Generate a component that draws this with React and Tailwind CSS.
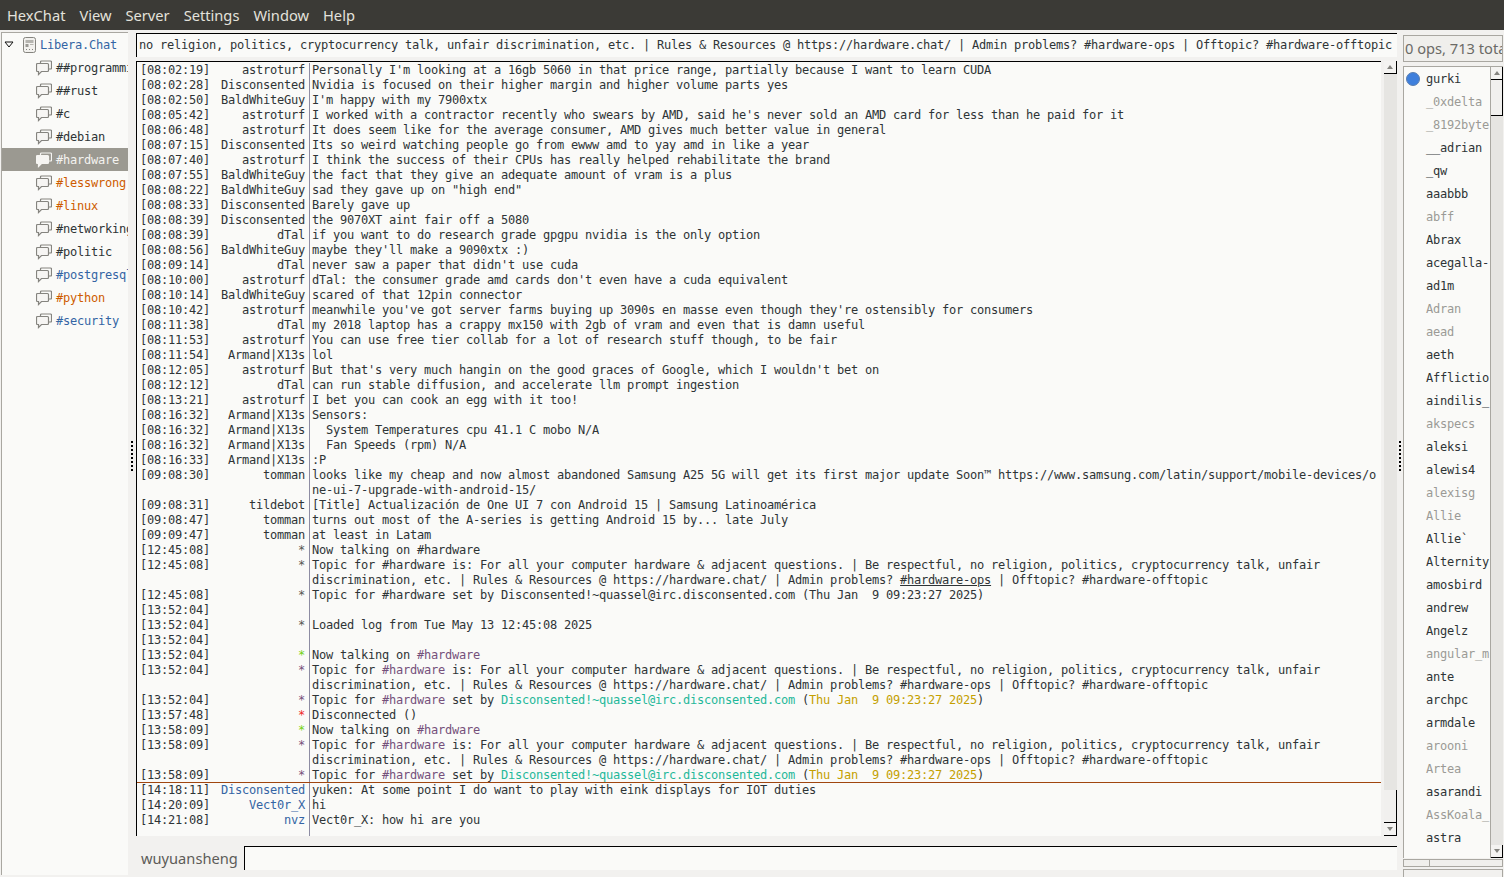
const HASH = 'text-[#75507b]'
const TEAL = 'text-[#1fb89a]'
const GOLD = 'text-[#c4a000]'

const topic1 = 'Topic for #hardware is: For all your computer hardware & adjacent questions. | Be respectful, no religion, politics, cryptocurrency talk, unfair'
const topic2 = 'discrimination, etc. | Rules & Resources @ https://hardware.chat/ | Admin problems? #hardware-ops | Offtopic? #hardware-offtopic'

function coloredTopic() {
  return (
    <>
      Topic for <span className={HASH}>#hardware</span> is: For all your computer hardware &amp; adjacent questions. | Be respectful, no religion, politics, cryptocurrency talk, unfair
    </>
  )
}

function coloredSetBy() {
  return (
    <>
      Topic for <span className={HASH}>#hardware</span> set by <span className={TEAL}>Disconsented!~quassel@irc.disconsented.com</span> (<span className={GOLD}>Thu Jan  9 09:23:27 2025</span>)
    </>
  )
}

function talking() {
  return (
    <>
      Now talking on <span className={HASH}>#hardware</span>
    </>
  )
}

const GRAY_STAR = 'text-[#555753]'
const PURPLE_STAR = 'text-[#75507b]'
const GREEN_STAR = 'text-[#73d216]'
const RED_STAR = 'text-[#ef2929]'
const BLUE_NICK = 'text-[#3465a4]'

const rows = [
  ['[08:02:19]', 'astroturf', '', "Personally I'm looking at a 16gb 5060 in that price range, partially because I want to learn CUDA"],
  ['[08:02:28]', 'Disconsented', '', 'Nvidia is focused on their higher margin and higher volume parts yes'],
  ['[08:02:50]', 'BaldWhiteGuy', '', "I'm happy with my 7900xtx"],
  ['[08:05:42]', 'astroturf', '', "I worked with a contractor recently who swears by AMD, said he's never sold an AMD card for less than he paid for it"],
  ['[08:06:48]', 'astroturf', '', 'It does seem like for the average consumer, AMD gives much better value in general'],
  ['[08:07:15]', 'Disconsented', '', 'Its so weird watching people go from ewww amd to yay amd in like a year'],
  ['[08:07:40]', 'astroturf', '', 'I think the success of their CPUs has really helped rehabilitate the brand'],
  ['[08:07:55]', 'BaldWhiteGuy', '', 'the fact that they give an adequate amount of vram is a plus'],
  ['[08:08:22]', 'BaldWhiteGuy', '', 'sad they gave up on "high end"'],
  ['[08:08:33]', 'Disconsented', '', 'Barely gave up'],
  ['[08:08:39]', 'Disconsented', '', 'the 9070XT aint fair off a 5080'],
  ['[08:08:39]', 'dTal', '', 'if you want to do research grade gpgpu nvidia is the only option'],
  ['[08:08:56]', 'BaldWhiteGuy', '', "maybe they'll make a 9090xtx :)"],
  ['[08:09:14]', 'dTal', '', "never saw a paper that didn't use cuda"],
  ['[08:10:00]', 'astroturf', '', "dTal: the consumer grade amd cards don't even have a cuda equivalent"],
  ['[08:10:14]', 'BaldWhiteGuy', '', 'scared of that 12pin connector'],
  ['[08:10:42]', 'astroturf', '', "meanwhile you've got server farms buying up 3090s en masse even though they're ostensibly for consumers"],
  ['[08:11:38]', 'dTal', '', 'my 2018 laptop has a crappy mx150 with 2gb of vram and even that is damn useful'],
  ['[08:11:53]', 'astroturf', '', 'You can use free tier collab for a lot of research stuff though, to be fair'],
  ['[08:11:54]', 'Armand|X13s', '', 'lol'],
  ['[08:12:05]', 'astroturf', '', "But that's very much hangin on the good graces of Google, which I wouldn't bet on"],
  ['[08:12:12]', 'dTal', '', 'can run stable diffusion, and accelerate llm prompt ingestion'],
  ['[08:13:21]', 'astroturf', '', 'I bet you can cook an egg with it too!'],
  ['[08:16:32]', 'Armand|X13s', '', 'Sensors:'],
  ['[08:16:32]', 'Armand|X13s', '', '  System Temperatures cpu 41.1 C mobo N/A'],
  ['[08:16:32]', 'Armand|X13s', '', '  Fan Speeds (rpm) N/A'],
  ['[08:16:33]', 'Armand|X13s', '', ':P'],
  ['[09:08:30]', 'tomman', '', 'looks like my cheap and now almost abandoned Samsung A25 5G will get its first major update Soon™ https://www.samsung.com/latin/support/mobile-devices/o'],
  ['', '', '', 'ne-ui-7-upgrade-with-android-15/'],
  ['[09:08:31]', 'tildebot', '', '[Title] Actualización de One UI 7 con Android 15 | Samsung Latinoamérica'],
  ['[09:08:47]', 'tomman', '', 'turns out most of the A-series is getting Android 15 by... late July'],
  ['[09:09:47]', 'tomman', '', 'at least in Latam'],
  ['[12:45:08]', '*', GRAY_STAR, 'Now talking on #hardware'],
  ['[12:45:08]', '*', GRAY_STAR, topic1],
  ['', '', '', <>discrimination, etc. | Rules &amp; Resources @ https://hardware.chat/ | Admin problems? <span className="underline">#hardware-ops</span> | Offtopic? #hardware-offtopic</>],
  ['[12:45:08]', '*', GRAY_STAR, 'Topic for #hardware set by Disconsented!~quassel@irc.disconsented.com (Thu Jan  9 09:23:27 2025)'],
  ['[13:52:04]', '', '', ''],
  ['[13:52:04]', '*', GRAY_STAR, 'Loaded log from Tue May 13 12:45:08 2025'],
  ['[13:52:04]', '', '', ''],
  ['[13:52:04]', '*', GREEN_STAR, talking()],
  ['[13:52:04]', '*', PURPLE_STAR, coloredTopic()],
  ['', '', '', topic2],
  ['[13:52:04]', '*', PURPLE_STAR, coloredSetBy()],
  ['[13:57:48]', '*', RED_STAR, 'Disconnected ()'],
  ['[13:58:09]', '*', GREEN_STAR, talking()],
  ['[13:58:09]', '*', PURPLE_STAR, coloredTopic()],
  ['', '', '', topic2],
  ['[13:58:09]', '*', PURPLE_STAR, coloredSetBy(), true],
  ['[14:18:11]', 'Disconsented', BLUE_NICK, 'yuken: At some point I do want to play with eink displays for IOT duties'],
  ['[14:20:09]', 'Vect0r_X', BLUE_NICK, 'hi'],
  ['[14:21:08]', 'nvz', BLUE_NICK, 'Vect0r_X: how hi are you'],
]

const channels = [
  ['##programming', 'text-[#2e3436]'],
  ['##rust', 'text-[#2e3436]'],
  ['#c', 'text-[#2e3436]'],
  ['#debian', 'text-[#2e3436]'],
  ['#hardware', 'text-[#f4f3f0]', true],
  ['#lesswrong', 'text-[#ce5c00]'],
  ['#linux', 'text-[#ce5c00]'],
  ['#networking', 'text-[#2e3436]'],
  ['#politic', 'text-[#2e3436]'],
  ['#postgresql', 'text-[#3465a4]'],
  ['#python', 'text-[#ce5c00]'],
  ['#security', 'text-[#3465a4]'],
]

const nicks = [
  ['gurki', 0], ['_0xdelta', 1], ['_8192byte', 1], ['__adrian', 0], ['_qw', 0], ['aaabbb', 0], ['abff', 1],
  ['Abrax', 0], ['acegalla-', 0], ['ad1m', 0], ['Adran', 1], ['aead', 1], ['aeth', 0], ['Afflictio', 0],
  ['aindilis_', 0], ['akspecs', 1], ['aleksi', 0], ['alewis4', 0], ['alexisg', 1], ['Allie', 1], ['Allie`', 0],
  ['Alternity', 0], ['amosbird', 0], ['andrew', 0], ['Angelz', 0], ['angular_m', 1], ['ante', 0], ['archpc', 0],
  ['armdale', 0], ['arooni', 1], ['Artea', 1], ['asarandi', 0], ['AssKoala_', 1], ['astra', 0],
]

function ServerIcon() {
  return (
    <svg width="16" height="16" viewBox="0 0 16 16" className="shrink-0">
      <rect x="1.5" y="0.5" width="12" height="15" rx="2" fill="#f2f1ee" stroke="#85847f" />
      <rect x="3.5" y="3" width="8" height="3" fill="#b5b4af" />
      <rect x="3.5" y="7" width="3" height="3" fill="#9a9994" />
      <rect x="8" y="7" width="3.5" height="1" fill="#b5b4af" />
      <rect x="4" y="12" width="1" height="1" fill="#85847f" />
      <rect x="7" y="12" width="1" height="1" fill="#85847f" />
      <rect x="10" y="12" width="1" height="1" fill="#85847f" />
    </svg>
  )
}

function BubbleIcon({ active }) {
  const stroke = active ? '#f6f5f2' : '#85847f'
  const fill = active ? '#f6f5f2' : '#f6f5f3'
  return (
    <svg width="16" height="16" viewBox="0 0 16 16" className="shrink-0">
      <path d="M4.5 3.5 V2 a1 1 0 0 1 1 -1 H14.5 a1 1 0 0 1 1 1 V8 a1 1 0 0 1 -1 1 H13" fill="none" stroke={stroke} strokeWidth="1.2" />
      <path d="M1.5 3.5 H11.5 a1 1 0 0 1 1 1 V10.5 a1 1 0 0 1 -1 1 H5.5 L2.5 14.5 V11.5 H1.5 a1 1 0 0 1 -1 -1 V4.5 a1 1 0 0 1 1 -1 Z" fill={fill} stroke={stroke} strokeWidth="1.2" />
    </svg>
  )
}

function Arrow({ down }) {
  return (
    <svg width="6" height="4" viewBox="0 0 6 4">
      <path d={down ? 'M0 0 H6 L3 4 Z' : 'M0 4 H6 L3 0 Z'} fill="#85847f" />
    </svg>
  )
}

function Stepper({ down }) {
  return (
    <div className="h-[13px] shrink-0 flex items-center justify-center bg-[#f4f3f1] border-r border-b border-black">
      <Arrow down={down} />
    </div>
  )
}

function Grip() {
  return (
    <div className="w-[2px] h-[32px] bg-[repeating-linear-gradient(to_bottom,#000_0,#000_2px,transparent_2px,transparent_4px)]" />
  )
}

function ChatRow({ row }) {
  const [time, nick, color, text, marker] = row
  return (
    <div className={`flex h-[15px] shrink-0 leading-[15px] whitespace-pre ${marker ? 'border-b border-[#a0460f]' : ''}`}>
      <div className="w-[70px] ml-[3px] shrink-0">{time}</div>
      <div className={`w-[95px] shrink-0 text-right ${color}`}>{nick}</div>
      <div className="ml-[4px] border-l border-[#8d8ca3] pl-[2px] flex-1 min-w-0 overflow-hidden">{text}</div>
    </div>
  )
}

export default function App() {
  return (
    <div className="w-[1504px] h-[877px] flex flex-col overflow-hidden bg-[#f2f1ef] font-['Noto_Sans',sans-serif]">
      <div className="h-[30px] shrink-0 flex items-center gap-[14px] pl-[7px] bg-[#3b3a36] text-[14.67px] text-[#e4e2dc]">
        <span>HexChat</span>
        <span>View</span>
        <span>Server</span>
        <span>Settings</span>
        <span>Window</span>
        <span>Help</span>
      </div>

      <div className="flex-1 min-h-0 flex">
        {/* channel tree */}
        <div className="w-[127px] ml-[1px] mt-[2px] mb-[2px] shrink-0 overflow-hidden bg-[#fafaf8] border-l border-t border-[#a9a7a1] font-['DejaVu_Sans_Mono',monospace] text-[12px] tracking-[-0.224px]">
          <div className="h-[23px] flex items-center">
            <svg width="10" height="7" viewBox="0 0 10 7" className="ml-[2px] mr-[8px] shrink-0">
              <path d="M1 1 H9 L5 6 Z" fill="none" stroke="#111" />
            </svg>
            <ServerIcon />
            <span className="ml-[2px] text-[#3465a4]">Libera.Chat</span>
          </div>
          {channels.map(([name, color, active]) => (
            <div key={name} className={`h-[23px] flex items-center pl-[34px] whitespace-pre overflow-hidden ${active ? 'bg-[#9b9991]' : ''}`}>
              <BubbleIcon active={active} />
              <span className={`ml-[4px] ${color}`}>{name}</span>
            </div>
          ))}
        </div>

        <div className="w-[8px] shrink-0 flex items-center justify-center pt-[6px]">
          <Grip />
        </div>

        {/* center */}
        <div className="w-[1261px] shrink-0 flex flex-col font-['DejaVu_Sans_Mono',monospace] text-[12px] tracking-[-0.224px] text-[#2e3436]">
          <div className="h-[24px] mt-[3px] shrink-0 flex items-center pl-[2px] pb-[2px] bg-[#fafaf8] border-l border-t border-black whitespace-pre overflow-hidden">
            no religion, politics, cryptocurrency talk, unfair discrimination, etc. | Rules &amp; Resources @ https://hardware.chat/ | Admin problems? #hardware-ops | Offtopic? #hardware-offtopic
          </div>

          <div className="h-[775px] mt-[4px] shrink-0 flex">
            <div className="flex-1 min-w-0 flex flex-col bg-[#fafaf8] border-l border-t border-black pt-[1px] mr-[3px]">
              {rows.map((row, i) => (
                <ChatRow key={i} row={row} />
              ))}
              <div className="flex flex-1">
                <div className="w-[172px] shrink-0" />
                <div className="border-l border-[#8d8ca3]" />
              </div>
            </div>
            <div className="w-[13px] shrink-0 flex flex-col bg-[#e6e5e2]">
              <Stepper />
              <div className="flex-1" />
              <div className="h-[33px] bg-[#f1f0ee] border-r border-b border-black" />
              <Stepper down />
            </div>
          </div>

          <div className="flex-1 flex items-start pt-[10px] pl-[5px]">
            <span className="font-['Noto_Sans',sans-serif] text-[14.67px] tracking-normal leading-[24px] text-[#5d5c58]">wuyuansheng</span>
            <div className="h-[24px] ml-[6px] flex-1 bg-[#fafaf8] border-l border-t border-black" />
          </div>
        </div>

        <div className="w-[6px] shrink-0 flex items-center justify-center pt-[6px]">
          <Grip />
        </div>

        {/* user list */}
        <div className="w-[100px] shrink-0 flex flex-col">
          <div className="h-[27px] mt-[5px] shrink-0 pl-[1px] border border-[#a9a7a1] bg-[#f0efec] text-[14.67px] leading-[25px] text-[#6b6a66] whitespace-pre overflow-hidden">
            0 ops, 713 total
          </div>
          <div className="h-[792px] mt-[4px] shrink-0 flex border-t border-l border-[#a9a7a1] bg-[#fafaf8]">
            <div className="flex-1 min-w-0 overflow-hidden font-['DejaVu_Sans_Mono',monospace] text-[12px] tracking-[-0.224px]">
              {nicks.map(([name, away], i) => (
                <div key={name} className={`h-[23px] flex items-center pl-[22px] whitespace-pre ${away ? 'text-[#9b9a96]' : 'text-[#2e3436]'}`}>
                  {i === 0 && (
                    <div className="w-[14px] h-[14px] -ml-[20px] mr-[6px] rounded-full bg-[#3e7fdc] border border-[#5b7fb0]" />
                  )}
                  {name}
                </div>
              ))}
            </div>
            <div className="w-[13px] shrink-0 flex flex-col bg-[#e6e5e2] border-l border-[#a9a7a1]">
              <Stepper />
              <div className="h-[36px] bg-[#f1f0ee] border-r border-b border-black" />
              <div className="flex-1" />
              <Stepper down />
            </div>
          </div>
          <div className="h-[8px] mt-[1px] shrink-0 border border-[#a9a7a1] bg-[#f0efec]">
            <div className="w-[26px] h-full border-r border-[#a9a7a1]" />
          </div>
          <div className="h-[8px] mt-[2px] shrink-0 border border-b-0 border-[#a9a7a1]" />
        </div>
      </div>
    </div>
  )
}
